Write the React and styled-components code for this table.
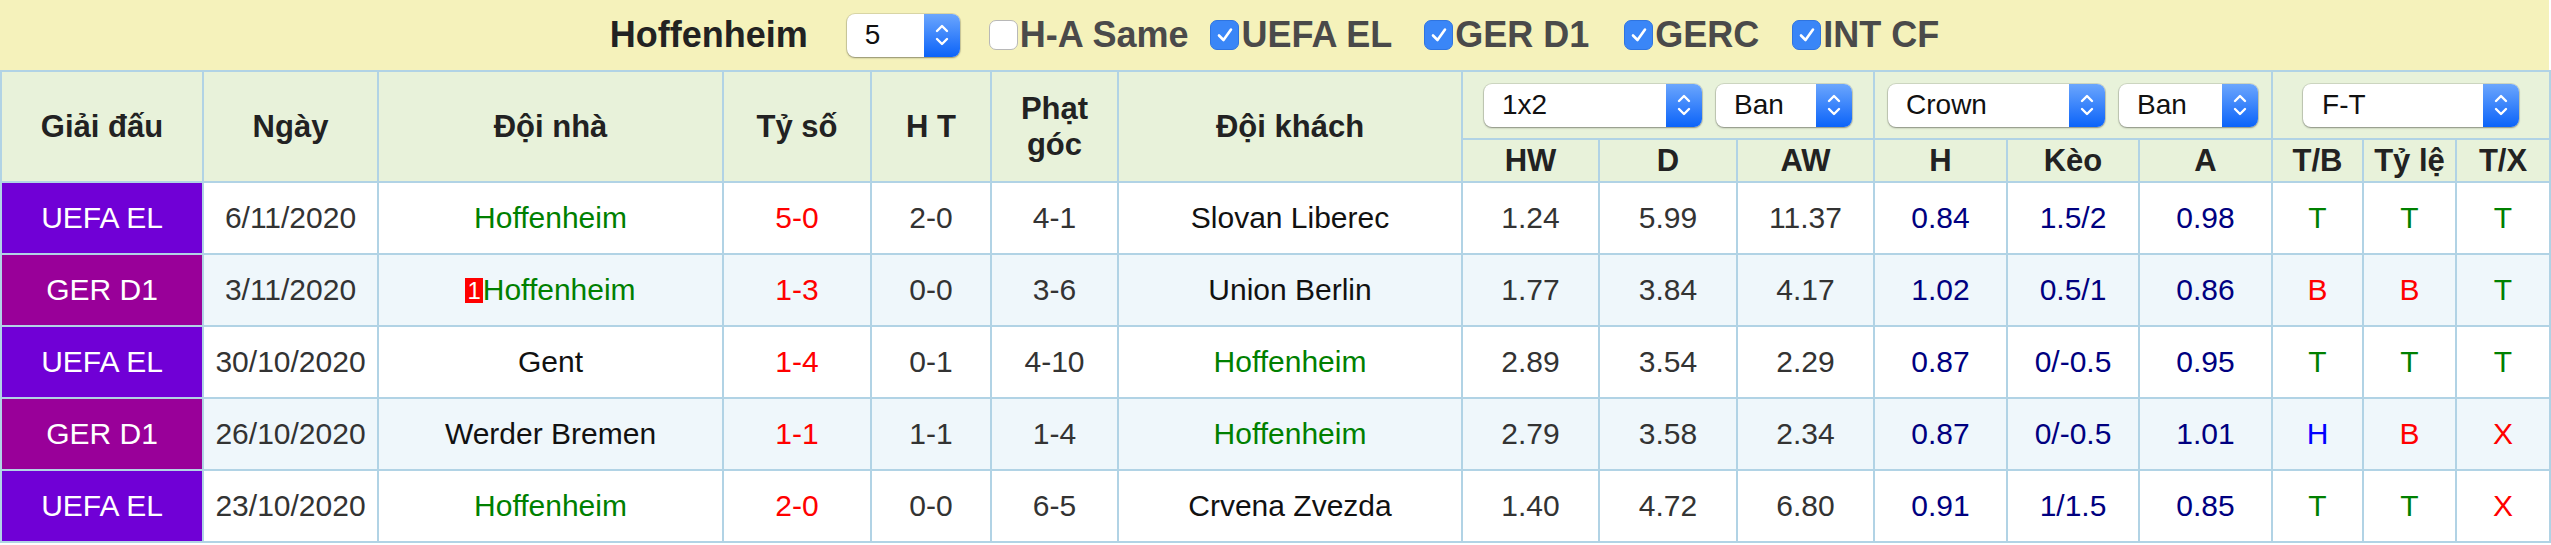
import React from "react";
import styled, { createGlobalStyle } from "styled-components";

const GlobalStyle = createGlobalStyle`
  html, body {
    margin: 0;
    padding: 0;
    background: #fff;
  }
  body {
    font-family: "Liberation Sans", Arial, Helvetica, sans-serif;
  }
`;

const Page = styled.div`
  width: 2549px;
`;

const TopBar = styled.div`
  height: 70px;
  background: #f5f2bb;
  display: flex;
  align-items: center;
  justify-content: center;
`;

const TeamTitle = styled.span`
  font-size: 36px;
  font-weight: bold;
  color: #222;
  margin-right: 39px;
`;

const Filter = styled.label`
  display: inline-flex;
  align-items: center;
  font-size: 36px;
  font-weight: bold;
  color: #4a4a4a;
  margin-left: ${(p) => p.$gap}px;
`;

const Check = styled.span`
  box-sizing: border-box;
  width: 29px;
  height: 30px;
  border-radius: 7px;
  margin-right: 2px;
  display: inline-flex;
  align-items: center;
  justify-content: center;
  background: ${(p) => (p.$on ? "#3a86f7" : "#fff")};
  border: ${(p) => (p.$on ? "1px solid #2f74e0" : "1px solid #b8b8b8")};
`;

const SelectBox = styled.div`
  display: inline-flex;
  vertical-align: middle;
  width: ${(p) => p.$w}px;
  height: 43px;
  border-radius: 8px;
  background: #fff;
  box-shadow: 0 0 0 1px rgba(0, 0, 0, 0.1), 0 1px 2px rgba(0, 0, 0, 0.35);
  overflow: hidden;
  font-size: 28px;
  font-weight: normal;
  color: #111;
  text-align: left;
`;

const SelectText = styled.span`
  flex: 1;
  display: flex;
  align-items: center;
  padding-left: ${(p) => p.$pad || 18}px;
`;

const SelectArrow = styled.span`
  width: 36px;
  display: flex;
  align-items: center;
  justify-content: center;
  background: linear-gradient(#6ba6fd, #0b63f9);
`;

const Table = styled.table`
  border-collapse: collapse;
  table-layout: fixed;
  width: 2549px;
`;

const Th = styled.th`
  background: #e8f2da;
  border: 2px solid #b1d3e5;
  font-size: 31px;
  font-weight: bold;
  color: #222;
  text-align: center;
  padding: 0;
  line-height: 36px;
  height: ${(p) => p.$h || 41}px;
`;

const SelectGroup = styled.div`
  display: flex;
  justify-content: center;
  gap: 14px;
`;

const Tr = styled.tr`
  background: ${(p) => (p.$alt ? "#eff7fb" : "#fff")};
`;

const Td = styled.td`
  border: 2px solid #b1d3e5;
  height: 70px;
  padding: 0;
  text-align: center;
  font-size: 30px;
  color: ${(p) => p.$color || "#333"};
`;

const LeagueTd = styled(Td)`
  background: ${(p) => p.$bg};
  color: #fff;
`;

const Card = styled.span`
  display: inline-block;
  background: #f00;
  color: #fff;
  font-size: 24px;
  line-height: 25px;
  padding: 0 2px;
  vertical-align: 1px;
`;

const Arrows = () => (
  <svg width="16" height="28" viewBox="0 0 16 28">
    <path d="M3 10 L8 5 L13 10" fill="none" stroke="#fff" strokeWidth="2.4" strokeLinecap="round" strokeLinejoin="round" />
    <path d="M3 18 L8 23 L13 18" fill="none" stroke="#fff" strokeWidth="2.4" strokeLinecap="round" strokeLinejoin="round" />
  </svg>
);

const Tick = () => (
  <svg width="20" height="20" viewBox="0 0 20 20">
    <path d="M4 10.5 L8.5 15 L16 4.5" fill="none" stroke="#fff" strokeWidth="2.6" strokeLinecap="round" strokeLinejoin="round" />
  </svg>
);

const Select = ({ w, value, pad }) => (
  <SelectBox $w={w}>
    <SelectText $pad={pad}>{value}</SelectText>
    <SelectArrow>
      <Arrows />
    </SelectArrow>
  </SelectBox>
);

const GREEN = "#008000";
const RED = "#ff0000";
const NAVY = "#000080";
const BLUE = "#0000ff";
const BLACK = "#111";

const resultColor = { T: GREEN, B: RED, H: BLUE, X: RED };
const leagueColor = { "UEFA EL": "#7000d6", "GER D1": "#990099" };

const filters = [
  { name: "H-A Same", on: false, gap: 29 },
  { name: "UEFA EL", on: true, gap: 22 },
  { name: "GER D1", on: true, gap: 32 },
  { name: "GERC", on: true, gap: 35 },
  { name: "INT CF", on: true, gap: 33 },
];

const matches = [
  { lg: "UEFA EL", date: "6/11/2020", home: "Hoffenheim", homeC: GREEN, score: "5-0", ht: "2-0", corner: "4-1", away: "Slovan Liberec", awayC: BLACK, hw: "1.24", d: "5.99", aw: "11.37", h: "0.84", keo: "1.5/2", a: "0.98", tb: "T", tl: "T", tx: "T" },
  { lg: "GER D1", date: "3/11/2020", home: "Hoffenheim", homeC: GREEN, card: 1, score: "1-3", ht: "0-0", corner: "3-6", away: "Union Berlin", awayC: BLACK, hw: "1.77", d: "3.84", aw: "4.17", h: "1.02", keo: "0.5/1", a: "0.86", tb: "B", tl: "B", tx: "T" },
  { lg: "UEFA EL", date: "30/10/2020", home: "Gent", homeC: BLACK, score: "1-4", ht: "0-1", corner: "4-10", away: "Hoffenheim", awayC: GREEN, hw: "2.89", d: "3.54", aw: "2.29", h: "0.87", keo: "0/-0.5", a: "0.95", tb: "T", tl: "T", tx: "T" },
  { lg: "GER D1", date: "26/10/2020", home: "Werder Bremen", homeC: BLACK, score: "1-1", ht: "1-1", corner: "1-4", away: "Hoffenheim", awayC: GREEN, hw: "2.79", d: "3.58", aw: "2.34", h: "0.87", keo: "0/-0.5", a: "1.01", tb: "H", tl: "B", tx: "X" },
  { lg: "UEFA EL", date: "23/10/2020", home: "Hoffenheim", homeC: GREEN, score: "2-0", ht: "0-0", corner: "6-5", away: "Crvena Zvezda", awayC: BLACK, hw: "1.40", d: "4.72", aw: "6.80", h: "0.91", keo: "1/1.5", a: "0.85", tb: "T", tl: "T", tx: "X" },
];

const colWidths = [202, 175, 345, 148, 120, 127, 344, 137, 138, 137, 133, 132, 133, 91, 93, 94];

export default function App() {
  return (
    <Page>
      <GlobalStyle />
      <TopBar>
        <TeamTitle>Hoffenheim</TeamTitle>
        <Select w={113} value="5" />
        {filters.map((f) => (
          <Filter key={f.name} $gap={f.gap}>
            <Check $on={f.on}>{f.on && <Tick />}</Check>
            {f.name}
          </Filter>
        ))}
      </TopBar>
      <Table>
        <colgroup>
          {colWidths.map((w, i) => (
            <col key={i} style={{ width: w }} />
          ))}
        </colgroup>
        <thead>
          <tr>
            <Th rowSpan={2}>Giải đấu</Th>
            <Th rowSpan={2}>Ngày</Th>
            <Th rowSpan={2}>Đội nhà</Th>
            <Th rowSpan={2}>Tỷ số</Th>
            <Th rowSpan={2}>H T</Th>
            <Th rowSpan={2}>
              Phạt
              <br />
              góc
            </Th>
            <Th rowSpan={2}>Đội khách</Th>
            <Th colSpan={3} $h={66}>
              <SelectGroup>
                <Select w={218} value="1x2" />
                <Select w={136} value="Ban" />
              </SelectGroup>
            </Th>
            <Th colSpan={3} $h={66}>
              <SelectGroup>
                <Select w={217} value="Crown" />
                <Select w={139} value="Ban" />
              </SelectGroup>
            </Th>
            <Th colSpan={3} $h={66}>
              <SelectGroup>
                <Select w={216} value="F-T" pad={19} />
              </SelectGroup>
            </Th>
          </tr>
          <tr>
            <Th>HW</Th>
            <Th>D</Th>
            <Th>AW</Th>
            <Th>H</Th>
            <Th>Kèo</Th>
            <Th>A</Th>
            <Th>T/B</Th>
            <Th>Tỷ lệ</Th>
            <Th>T/X</Th>
          </tr>
        </thead>
        <tbody>
          {matches.map((m, i) => (
            <Tr key={i} $alt={i % 2 === 1}>
              <LeagueTd $bg={leagueColor[m.lg]}>{m.lg}</LeagueTd>
              <Td>{m.date}</Td>
              <Td $color={m.homeC}>
                {m.card && <Card>{m.card}</Card>}
                {m.home}
              </Td>
              <Td $color={RED}>{m.score}</Td>
              <Td>{m.ht}</Td>
              <Td>{m.corner}</Td>
              <Td $color={m.awayC}>{m.away}</Td>
              <Td>{m.hw}</Td>
              <Td>{m.d}</Td>
              <Td>{m.aw}</Td>
              <Td $color={NAVY}>{m.h}</Td>
              <Td $color={NAVY}>{m.keo}</Td>
              <Td $color={NAVY}>{m.a}</Td>
              <Td $color={resultColor[m.tb]}>{m.tb}</Td>
              <Td $color={resultColor[m.tl]}>{m.tl}</Td>
              <Td $color={resultColor[m.tx]}>{m.tx}</Td>
            </Tr>
          ))}
        </tbody>
      </Table>
    </Page>
  );
}
